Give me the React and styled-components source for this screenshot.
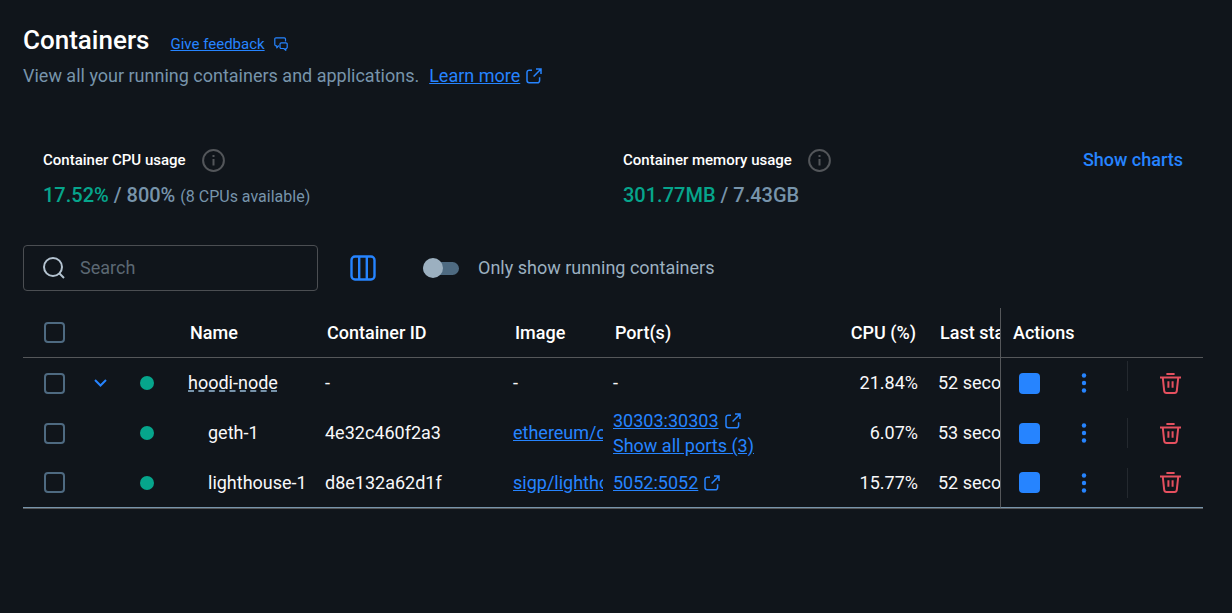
import React from "react";
import styled, { createGlobalStyle } from "styled-components";

const GlobalStyle = createGlobalStyle`
  *, *::before, *::after { box-sizing: border-box; }
  body {
    margin: 0;
    background: #10151b;
    color: #fff;
    font-family: Roboto, "Liberation Sans", sans-serif;
    font-size: 18px;
    line-height: 25px;
  }
  svg { display: block; flex: none; fill: none; stroke: currentColor; }
`;

const Page = styled.main`
  padding: 22px 29px 24px 23px;
`;

const TitleRow = styled.div`
  display: flex;
  align-items: center;
  gap: 21px;
`;

const Title = styled.h1`
  margin: 0;
  font-size: 26px;
  line-height: 36px;
  font-weight: 500;
`;

const Link = styled.a`
  display: inline-flex;
  align-items: center;
  gap: 6px;
  color: #2684ff;
  font-size: ${(p) => (p.$small ? 15 : 18)}px;
  text-decoration: underline;
`;

const FeedbackLink = styled(Link)`
  gap: 9px;
  padding-top: 8px;
`;

const Subtitle = styled.p`
  display: flex;
  flex-wrap: wrap;
  gap: 10px;
  margin: 5px 0 0;
  color: #7794ab;
`;

const Stats = styled.section`
  display: grid;
  grid-template-columns: 580px 1fr auto;
  padding: 0 20px;
  margin-top: 59px;
`;

const StatLabel = styled.div`
  display: flex;
  align-items: center;
  gap: 16px;
  font-size: 15px;
  font-weight: 500;
  line-height: 26px;
`;

const InfoIcon = styled.svg`
  color: #53565a;
`;

const StatValue = styled.div`
  margin-top: 9px;
  color: #7794ab;
  font-size: 20px;
  font-weight: 500;
  line-height: 26px;
`;

const Used = styled.span`
  color: #06a58c;
`;

const Note = styled.span`
  font-size: 16px;
  font-weight: 400;
`;

const TextButton = styled.button`
  align-self: start;
  padding: 0;
  border: 0;
  background: none;
  color: #2684ff;
  font: inherit;
  font-weight: 500;
  line-height: 26px;
  cursor: pointer;
`;

const Toolbar = styled.div`
  display: flex;
  align-items: center;
  margin-top: 35px;
  line-height: 24px;
`;

const SearchBox = styled.label`
  display: flex;
  align-items: center;
  gap: 14px;
  width: 295px;
  height: 46px;
  padding: 0 16px 0 18px;
  border: 1px solid #4b4e52;
  border-radius: 4px;
  color: #b4c3d0;
`;

const SearchInput = styled.input`
  flex: 1;
  min-width: 0;
  height: 24px;
  padding: 0;
  border: 0;
  outline: 0;
  background: none;
  color: #fff;
  font: inherit;
  &::placeholder { color: #5c6873; opacity: 1; }
`;

const IconButton = styled.button`
  display: flex;
  flex: none;
  align-items: center;
  justify-content: center;
  width: ${(p) => p.$width || 32}px;
  height: 32px;
  padding: 0;
  border: 0;
  background: none;
  color: ${(p) => (p.$danger ? "#e5505f" : "#2684ff")};
  cursor: pointer;
`;

const ColumnsButton = styled(IconButton)`
  margin: 0 44px 0 29px;
`;

const SwitchLabel = styled.label`
  display: flex;
  align-items: center;
  gap: 19px;
  color: #9cb0c0;
`;

const Switch = styled.input`
  appearance: none;
  display: flex;
  align-items: center;
  width: 36px;
  height: 13px;
  margin: 0;
  border-radius: 7px;
  background: #4e6a81;
  &::before {
    content: "";
    width: 20px;
    height: 20px;
    border-radius: 50%;
    background: #9cb0c0;
  }
  &:checked { justify-content: flex-end; }
`;

const Table = styled.table`
  width: 100%;
  margin-top: 17px;
  table-layout: fixed;
  border-collapse: separate;
  border-spacing: 0;
  border-bottom: 1px solid #55575a;
`;

const Col = styled.col`
  width: ${(p) => p.$width}px;
`;

const HeadCell = styled.th`
  height: 50px;
  padding: 0 12px;
  border-bottom: 1px solid #55575a;
  overflow: hidden;
  white-space: nowrap;
  font-weight: 500;
  text-align: ${(p) => (p.$right ? "right" : "left")};
`;

const Cell = styled.td`
  height: 50px;
  padding: 0 0 0 10px;
  overflow: hidden;
  white-space: nowrap;
  color: #f8f8fa;
  line-height: 24px;
  text-align: left;
`;

const NameCell = styled(Cell)`
  padding-left: ${(p) => (p.$nested ? 30 : 10)}px;
`;

const NumberCell = styled(Cell)`
  padding: 0 10px;
  text-align: right;
`;

const CheckCell = styled(Cell).attrs((p) => ({ as: p.$head ? "th" : "td" }))`
  padding-left: 21px;
  ${(p) => p.$head && "border-bottom: 1px solid #55575a;"}
`;

const ActionsHead = styled(HeadCell)`
  border-left: 1px solid #55575a;
`;

const ActionsCell = styled(Cell)`
  padding: 0;
  border-left: 1px solid #55575a;
`;

const Body = styled.tbody`
  tr:last-child td { border-bottom: 1px solid #7794ab; }
`;

const Checkbox = styled.input`
  appearance: none;
  display: block;
  width: 21px;
  height: 21px;
  margin: 0;
  border: 2px solid #4e6a81;
  border-radius: 4px;
  &:checked { background: #2684ff; }
`;

const StatusDot = styled.span`
  display: block;
  width: 14px;
  height: 14px;
  border-radius: 50%;
  background: #06a58c;
`;

const GroupName = styled.span`
  text-decoration: underline dashed #7794ab 2px;
  text-underline-offset: 1px;
  text-decoration-skip-ink: none;
`;

const Ports = styled.div`
  display: flex;
  flex-direction: column;
  align-items: flex-start;
  line-height: 25px;
`;

const Actions = styled.div`
  display: flex;
  align-items: center;
  height: 44px;
  padding: 0 16px 0 12px;
`;

const Stop = styled.span`
  width: 21px;
  height: 21px;
  border-radius: 4px;
  background: #2684ff;
`;

const Divider = styled.span`
  flex: none;
  width: 1px;
  height: 30px;
  margin: 0 26px 0 4px;
  align-self: ${(p) => (p.$top ? "flex-start" : "center")};
  background: #24292f;
`;

const ExternalIcon = () => (
  <svg width="16" height="16" viewBox="0 0 16 16" strokeWidth="1.5" aria-hidden="true">
    <path d="M6 2.2H3.2a2.2 2.2 0 0 0-2.2 2.2v8.2a2.2 2.2 0 0 0 2.2 2.2h8.2a2.2 2.2 0 0 0 2.2-2.2V9.2" />
    <path d="M10 1h5v5M15 1 7.6 8.6" />
  </svg>
);

const FeedbackIcon = () => (
  <svg width="14" height="14" viewBox="0 0 14 14" strokeWidth="1.2" strokeLinejoin="round" aria-hidden="true">
    <path d="M5 8.8H4.6L2.8 10.8V8.8H2A1.2 1.2 0 0 1 .8 7.6V2A1.2 1.2 0 0 1 2 .8H10.3A1.2 1.2 0 0 1 11.5 2V4.5" />
    <path d="M7.2 5.9H12A1.2 1.2 0 0 1 13.2 7.1V10.3A1.2 1.2 0 0 1 12 11.5H11.8V13.3L9.8 11.5H7.2A1.2 1.2 0 0 1 6 10.3V7.1A1.2 1.2 0 0 1 7.2 5.9Z" />
  </svg>
);

const Info = () => (
  <InfoIcon width="23" height="23" viewBox="0 0 23 23" strokeWidth="2" aria-hidden="true">
    <circle cx="11.5" cy="11.5" r="10.4" />
    <path d="M11.5 6v2M11.5 10v6.5" />
  </InfoIcon>
);

const SearchIcon = () => (
  <svg width="24" height="24" viewBox="0 0 24 24" strokeWidth="2" aria-hidden="true">
    <circle cx="11" cy="11" r="9" />
    <path d="m17 17 5 5" />
  </svg>
);

const ColumnsIcon = () => (
  <svg width="26" height="26" viewBox="0 0 26 26" strokeWidth="2.4" aria-hidden="true">
    <rect x="1.5" y="1.5" width="23" height="23" rx="3.5" />
    <path d="M9.2 1v24M16.8 1v24" />
  </svg>
);

const ChevronIcon = () => (
  <svg width="14" height="8" viewBox="0 0 14 8" strokeWidth="2" aria-hidden="true">
    <path d="m1 1 5.5 5.5L12 1" />
  </svg>
);

const DotsIcon = () => (
  <svg width="6" height="20" viewBox="0 0 6 20" aria-hidden="true">
    <g fill="currentColor" stroke="none">
      <circle cx="3" cy="2.5" r="2.2" />
      <circle cx="3" cy="10" r="2.2" />
      <circle cx="3" cy="17.5" r="2.2" />
    </g>
  </svg>
);

const TrashIcon = () => (
  <svg width="21" height="21" viewBox="0 0 21 21" strokeWidth="2" aria-hidden="true">
    <path d="M6.4 1h8.2M0 4.6h21M2.8 5l1.4 12.8a2.4 2.4 0 0 0 2.3 2.1h8a2.4 2.4 0 0 0 2.3-2.1L18.2 5" />
    <path d="M8.4 8.3v6.5M12.6 8.3v6.5" />
  </svg>
);

const containers = [
  { name: "hoodi-node", group: true, cpu: "21.84%", started: "52 seconds ago" },
  {
    name: "geth-1",
    id: "4e32c460f2a3",
    image: "ethereum/client-go",
    port: "30303:30303",
    more: "Show all ports (3)",
    cpu: "6.07%",
    started: "53 seconds ago",
  },
  {
    name: "lighthouse-1",
    id: "d8e132a62d1f",
    image: "sigp/lighthouse",
    port: "5052:5052",
    cpu: "15.77%",
    started: "52 seconds ago",
  },
];

function ContainerRow({ item }) {
  return (
    <tr>
      <CheckCell>
        <Checkbox type="checkbox" aria-label={`Select ${item.name}`} />
      </CheckCell>
      <Cell>
        {item.group && (
          <IconButton $width={14} aria-label="Collapse group">
            <ChevronIcon />
          </IconButton>
        )}
      </Cell>
      <Cell>
        <StatusDot role="img" aria-label="Running" />
      </Cell>
      <NameCell $nested={!item.group}>
        {item.group ? <GroupName>{item.name}</GroupName> : item.name}
      </NameCell>
      <Cell>{item.id || "-"}</Cell>
      <Cell>{item.image ? <Link href="#image">{item.image}</Link> : "-"}</Cell>
      <Cell>
        {item.port ? (
          <Ports>
            <Link href="#port">
              {item.port}
              <ExternalIcon />
            </Link>
            {item.more && <Link href="#ports">{item.more}</Link>}
          </Ports>
        ) : (
          "-"
        )}
      </Cell>
      <NumberCell>{item.cpu}</NumberCell>
      <Cell>{item.started}</Cell>
      <ActionsCell>
        <Actions>
          <IconButton aria-label="Stop">
            <Stop />
          </IconButton>
          <IconButton $width={78} aria-label="More actions">
            <DotsIcon />
          </IconButton>
          <Divider $top={item.group} />
          <IconButton $danger aria-label="Delete">
            <TrashIcon />
          </IconButton>
        </Actions>
      </ActionsCell>
    </tr>
  );
}

export default function App() {
  return (
    <Page>
      <GlobalStyle />
      <TitleRow>
        <Title>Containers</Title>
        <FeedbackLink $small href="#feedback">
          Give feedback
          <FeedbackIcon />
        </FeedbackLink>
      </TitleRow>
      <Subtitle>
        View all your running containers and applications.
        <Link href="#learn">
          Learn more
          <ExternalIcon />
        </Link>
      </Subtitle>

      <Stats>
        <div>
          <StatLabel>
            Container CPU usage
            <Info />
          </StatLabel>
          <StatValue>
            <Used>17.52%</Used> / 800% <Note>(8 CPUs available)</Note>
          </StatValue>
        </div>
        <div>
          <StatLabel>
            Container memory usage
            <Info />
          </StatLabel>
          <StatValue>
            <Used>301.77MB</Used> / 7.43GB
          </StatValue>
        </div>
        <TextButton>Show charts</TextButton>
      </Stats>

      <Toolbar>
        <SearchBox>
          <SearchIcon />
          <SearchInput type="text" placeholder="Search" aria-label="Search" />
        </SearchBox>
        <ColumnsButton aria-label="Choose columns">
          <ColumnsIcon />
        </ColumnsButton>
        <SwitchLabel>
          <Switch type="checkbox" role="switch" />
          Only show running containers
        </SwitchLabel>
      </Toolbar>

      <Table>
        <colgroup>
          <Col $width={61} />
          <Col $width={46} />
          <Col $width={48} />
          <Col $width={137} />
          <Col $width={188} />
          <Col $width={100} />
          <col />
          <Col $width={100} />
          <Col $width={72} />
          <Col $width={203} />
        </colgroup>
        <thead>
          <tr>
            <CheckCell $head>
              <Checkbox type="checkbox" aria-label="Select all containers" />
            </CheckCell>
            <HeadCell />
            <HeadCell />
            <HeadCell>Name</HeadCell>
            <HeadCell>Container ID</HeadCell>
            <HeadCell>Image</HeadCell>
            <HeadCell>Port(s)</HeadCell>
            <HeadCell $right>CPU (%)</HeadCell>
            <HeadCell>Last started</HeadCell>
            <ActionsHead>Actions</ActionsHead>
          </tr>
        </thead>
        <Body>
          {containers.map((item) => (
            <ContainerRow key={item.name} item={item} />
          ))}
        </Body>
      </Table>
    </Page>
  );
}
